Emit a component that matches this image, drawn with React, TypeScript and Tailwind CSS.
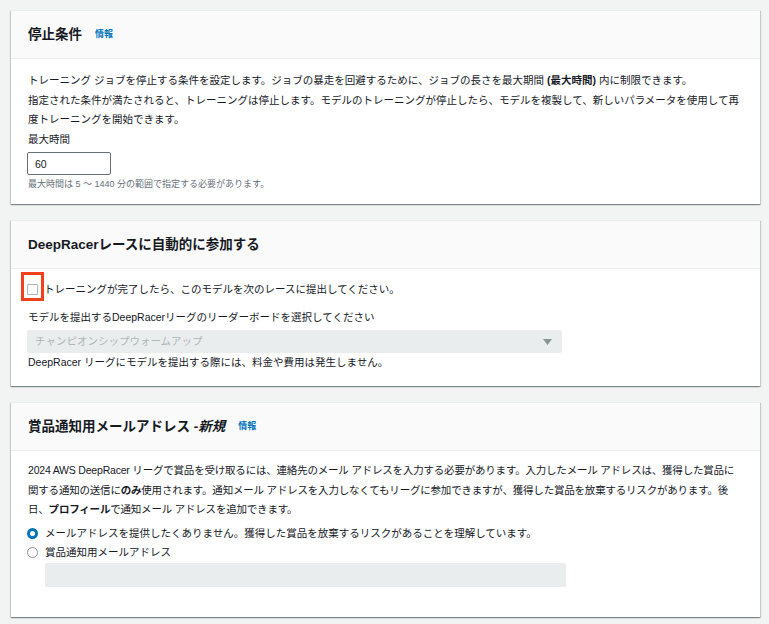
import type { ReactNode } from 'react'

const font = "font-['Liberation_Sans','Noto_Sans_CJK_JP',sans-serif]"

function Panel({ title, info, children }: { title: ReactNode; info?: boolean; children: ReactNode }) {
  return (
    <section className="bg-white border-t border-[#eaeded] shadow-[0_1px_1px_0_rgba(0,28,36,0.3),1px_1px_1px_0_rgba(0,28,36,0.15),-1px_1px_1px_0_rgba(0,28,36,0.15)]">
      <header className="h-[48px] flex items-center px-[17px] bg-[#fafafa] border-b border-[#eaeded]">
        <h2 className="text-[13.5px] font-bold text-[#16191f] leading-none">{title}</h2>
        {info && <a className="ml-[13px] text-[9px] font-bold text-[#0073bb] leading-none">情報</a>}
      </header>
      {children}
    </section>
  )
}

function Radio({ checked, children }: { checked?: boolean; children: ReactNode }) {
  return (
    <label className="flex items-center h-[19.5px]">
      {checked ? (
        <span className="w-[11px] h-[11px] rounded-full border-[3.5px] border-[#0073bb] bg-white ml-[-1px]" />
      ) : (
        <span className="w-[11px] h-[11px] rounded-full border border-[#879596] bg-white ml-[-1px]" />
      )}
      <span className="ml-[7px]">{children}</span>
    </label>
  )
}

export default function App() {
  return (
    <main className={`min-h-screen bg-[#f2f3f3] pt-[10px] pl-[11px] pr-[9px] pb-[10px] text-[#16191f] text-[10.5px] leading-[19.5px] ${font}`}>
      <div className="flex flex-col gap-[16px]">
        <Panel title="停止条件" info>
          <div className="px-[17px] pt-[12px] pb-[13px]">
            <p>
              トレーニング ジョブを停止する条件を設定します。ジョブの暴走を回避するために、ジョブの長さを最大期間 <b>(最大時間)</b> 内に制限できます。
            </p>
            <p>
              指定された条件が満たされると、トレーニングは停止します。モデルのトレーニングが停止したら、モデルを複製して、新しいパラメータを使用して再度トレーニングを開始できます。
            </p>
            <div>最大時間</div>
            <input
              defaultValue="60"
              className="mt-[3px] block w-[84px] h-[23px] -ml-[1px] px-[7px] border border-[#687078] rounded-[2px] text-[10.5px] text-[#16191f] outline-none"
            />
            <p className="mt-[3px] text-[9px] leading-[13px] text-[#687078]">
              最大時間は 5 ～ 1440 分の範囲で指定する必要があります。
            </p>
          </div>
        </Panel>

        <Panel title="DeepRacerレースに自動的に参加する">
          <div className="px-[17px] pt-[11px] pb-[15px]">
            <label className="flex items-center h-[19.5px]">
              <span className="relative -ml-[1px] w-[11px] h-[11px] border border-[#aab7b8] rounded-[1px] bg-white">
                <span className="absolute left-[-7px] top-[-13px] w-[23px] h-[29px] border-[3px] border-[#f0401c]" />
              </span>
              <span className="ml-[6px]">トレーニングが完了したら、このモデルを次のレースに提出してください。</span>
            </label>
            <div className="mt-[8px]">モデルを提出するDeepRacerリーグのリーダーボードを選択してください</div>
            <div className="mt-[3px] -ml-[1px] w-[535px] h-[23px] bg-[#eaeded] rounded-[2px] flex items-center justify-between pl-[8px] pr-[10px] text-[#aab7b8]">
              <span>チャンピオンシップウォームアップ</span>
              <svg width="9" height="6" viewBox="0 0 9 6">
                <path d="M0 0h9L4.5 6z" fill="#879596" />
              </svg>
            </div>
            <p className="leading-[18px]">DeepRacer リーグにモデルを提出する際には、料金や費用は発生しません。</p>
          </div>
        </Panel>

        <Panel
          title={
            <>
              賞品通知用メールアドレス -<i>新規</i>
            </>
          }
          info
        >
          <div className="px-[17px] pt-[10px] pb-[30px]">
            <p className="tracking-[-0.2px]">
              2024 AWS DeepRacer リーグで賞品を受け取るには、連絡先のメール アドレスを入力する必要があります。入力したメール アドレスは、獲得した賞品に関する通知の送信に<b>のみ</b>使用されます。通知メール アドレスを入力しなくてもリーグに参加できますが、獲得した賞品を放棄するリスクがあります。後日、<b>プロフィール</b>で通知メール アドレスを追加できます。
            </p>
            <div className="mt-[4px]">
              <Radio checked>メールアドレスを提供したくありません。獲得した賞品を放棄するリスクがあることを理解しています。</Radio>
              <Radio>賞品通知用メールアドレス</Radio>
              <div className="ml-[17px] w-[521px] h-[24px] bg-[#eaeded] rounded-[2px]" />
            </div>
          </div>
        </Panel>
      </div>
    </main>
  )
}
